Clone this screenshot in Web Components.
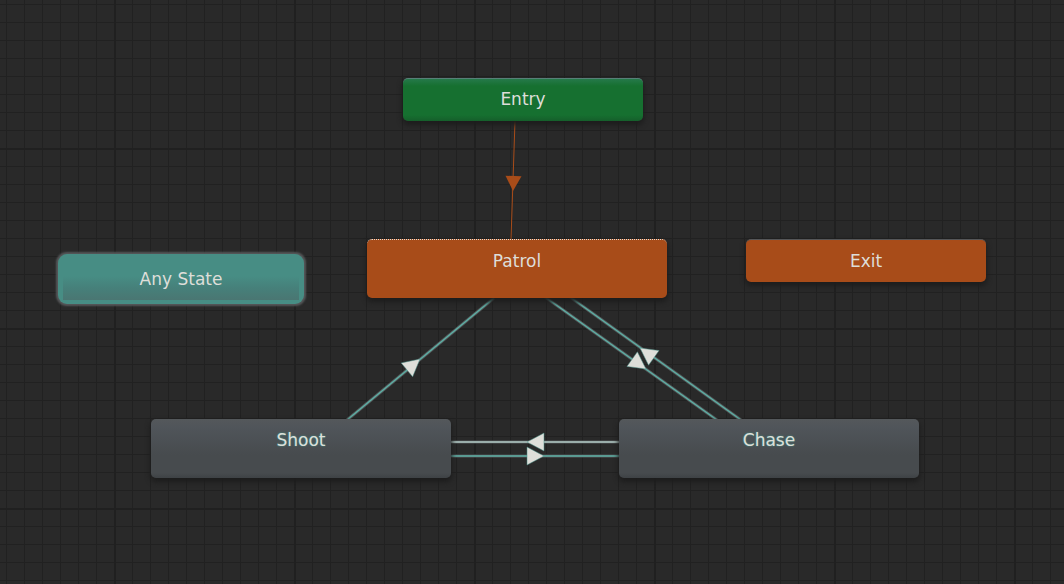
<!DOCTYPE html>
<html lang="en">
<head>
<meta charset="utf-8">
<meta name="viewport" content="width=device-width, initial-scale=1">
<title>Animator</title>
<style>
  html, body { margin: 0; min-height: 100%; background: #292929; }
  body { font: 17px/24px "DejaVu Sans", Verdana, sans-serif; color: #deded9; }
</style>
</head>
<body>
<animator-graph>
  <state-link from="515,121" to="511,239" tip="513,191" tone="entry"></state-link>
  <state-link from="347,420" to="494,298" tip="420,359"></state-link>
  <state-link from="545,297" to="717,420" tip="646,369"></state-link>
  <state-link from="741,420" to="570,297" tip="640,348"></state-link>
  <state-link from="619,442" to="451,442" tip="527,442" tone="bright"></state-link>
  <state-link from="451,456" to="619,456" tip="544,456"></state-link>

  <state-node kind="entry" x="403" y="78">Entry</state-node>
  <state-node kind="any" x="58" y="254">Any State</state-node>
  <state-node kind="default" x="367" y="239">Patrol</state-node>
  <state-node kind="exit" x="746" y="239">Exit</state-node>
  <state-node kind="state" x="151" y="419">Shoot</state-node>
  <state-node kind="state" x="619" y="419">Chase</state-node>
</animator-graph>

<script>
// The canvas: a minor grid every 18px and a major one every 180px.
class AnimatorGraph extends HTMLElement {
  constructor() {
    super();
    this.attachShadow({ mode: "open" }).innerHTML = `
      <style>
        :host {
          display: block; position: relative; min-height: 100vh; overflow: hidden;
          background-color: #292929;
          background-image:
            linear-gradient(90deg, #202020 2px, transparent 2px),
            linear-gradient(#202020 2px, transparent 2px),
            linear-gradient(90deg, #212121 1px, transparent 1px),
            linear-gradient(#212121 1px, transparent 1px);
          background-size: 180px 180px, 180px 180px, 18px 18px, 18px 18px;
          background-position: 114px 0, 0 148px, 6px 0, 0 4px;
        }
      </style>
      <slot></slot>`;
  }
}

class StateNode extends HTMLElement {
  constructor() {
    super();
    this.attachShadow({ mode: "open" }).innerHTML = `
      <style>
        :host {
          position: absolute; left: var(--x); top: var(--y);
          box-sizing: border-box; width: 240px; height: 43px; padding-top: 9px;
          border-radius: 5px; text-align: center; white-space: nowrap;
          box-shadow: 0 3px 5px 1px #1d1d1d;
        }
        :host([kind="entry"]) {
          background: linear-gradient(#25794a 0, #167030 7px, #167030 36px, #155f2b 100%);
          border-top: 1px solid #578078; padding-top: 8px;
        }
        :host([kind="exit"]) { background: #a84c19; border-top: 1px solid #555658; }
        :host([kind="default"]), :host([kind="state"]) { width: 300px; height: 59px; }
        :host([kind="default"]) { background: #a84c19; border-top: 1px dotted #deded9; }
        :host([kind="state"]) {
          background: linear-gradient(#54585b 0, #50555a 8px, #474b4e 36px, #474b4e 54px, #3e4245 100%);
          text-shadow: 0 0 1px #478d84, 0 0 2px #478d84;
        }
        :host([kind="any"]) {
          width: 246px; height: 50px; padding-top: 13px; border-radius: 9px;
          background: linear-gradient(transparent 22px, #46807a 34px, #4a7672 46px, transparent 46px)
            5px 0 / 236px 100% no-repeat #478d84;
          box-shadow: 0 0 2px 2px #555759;
        }
      </style>
      <slot></slot>`;
  }
  connectedCallback() {
    this.style.setProperty("--x", this.getAttribute("x") + "px");
    this.style.setProperty("--y", this.getAttribute("y") + "px");
  }
}

// A transition: a line between two points with an arrowhead along it.
class StateLink extends HTMLElement {
  constructor() {
    super();
    this.attachShadow({ mode: "open" });
  }
  connectedCallback() {
    const point = name => this.getAttribute(name).split(",").map(Number);
    const [x1, y1] = point("from"), [x2, y2] = point("to"), [tx, ty] = point("tip");
    const length = Math.hypot(x2 - x1, y2 - y1);
    const ux = (x2 - x1) / length, uy = (y2 - y1) / length;
    const long = this.getAttribute("tone") === "entry" ? 15 : 17;
    const half = this.getAttribute("tone") === "entry" ? 8 : 9;
    const bx = tx - ux * long, by = ty - uy * long;
    const head = `${tx},${ty} ${bx - uy * half},${by + ux * half} ${bx + uy * half},${by - ux * half}`;
    const line = `x1="${x1}" y1="${y1}" x2="${x2}" y2="${y2}"`;
    this.shadowRoot.innerHTML = `
      <style>
        :host { position: absolute; inset: 0; pointer-events: none; }
        svg { display: block; width: 100%; height: 100%; overflow: visible; }
        .halo { stroke: #55595b; stroke-width: 3; }
        .core { stroke: #5cb0a5; stroke-width: 1.5; }
        .head { fill: #deded9; stroke: #478d84; stroke-width: 0.5; }
        :host([tone="bright"]) .core { stroke: #b3cbc6; }
        :host([tone="entry"]) .halo { display: none; }
        :host([tone="entry"]) .core { stroke: #a84c19; stroke-width: 1; }
        :host([tone="entry"]) .head { fill: #a84c19; stroke: none; }
      </style>
      <svg aria-hidden="true">
        <line class="halo" ${line}/>
        <line class="core" ${line}/>
        <polygon class="head" points="${head}"/>
      </svg>`;
  }
}

customElements.define("animator-graph", AnimatorGraph);
customElements.define("state-node", StateNode);
customElements.define("state-link", StateLink);
</script>
</body>
</html>
